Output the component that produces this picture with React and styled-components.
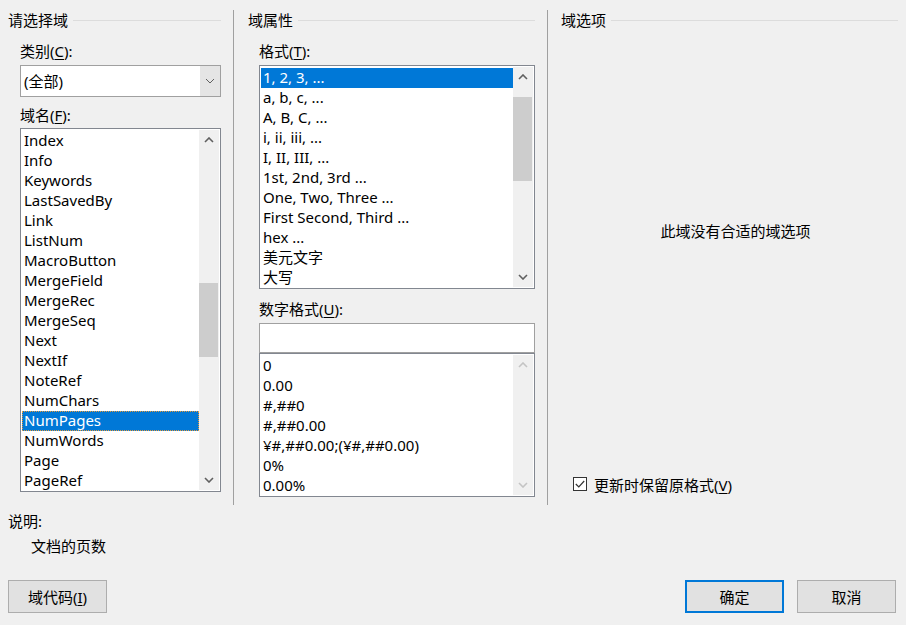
import React from 'react';
import styled, { createGlobalStyle } from 'styled-components';

const GlobalStyle = createGlobalStyle`
  html, body {
    margin: 0;
    padding: 0;
    background: #f0f0f0;
  }
  body {
    font-family: "Segoe UI", "Noto Sans", "Noto Sans CJK SC", sans-serif;
    font-size: 15px;
    color: #000;
  }
  u {
    text-decoration-thickness: 1px;
    text-underline-offset: 2px;
  }
`;

const fieldNames = [
  'Index', 'Info', 'Keywords', 'LastSavedBy', 'Link', 'ListNum', 'MacroButton',
  'MergeField', 'MergeRec', 'MergeSeq', 'Next', 'NextIf', 'NoteRef', 'NumChars',
  'NumPages', 'NumWords', 'Page', 'PageRef',
];

const formats = [
  '1, 2, 3, ...', 'a, b, c, ...', 'A, B, C, ...', 'i, ii, iii, ...', 'I, II, III, ...',
  '1st, 2nd, 3rd ...', 'One, Two, Three ...', 'First Second, Third ...', 'hex ...',
  '美元文字', '大写',
];

const numberFormats = [
  '0', '0.00', '#,##0', '#,##0.00', '¥#,##0.00;(¥#,##0.00)', '0%', '0.00%',
];

const Dialog = styled.div`
  width: 906px;
  height: 625px;
  box-sizing: border-box;
  padding: 10px 8px 0;
  display: flex;
  flex-direction: column;
`;

const Columns = styled.div`
  display: grid;
  grid-template-columns: 225px 314px 351px;
  height: 495px;
`;

const Column = styled.div`
  display: flex;
  flex-direction: column;
  box-sizing: border-box;
  min-width: 0;
  padding: 0 ${p => p.$padRight}px 0 ${p => p.$padLeft}px;
  border-left: ${p => (p.$divider ? '1px solid #a0a0a0' : 'none')};
`;

const GroupTitle = styled.div`
  display: flex;
  align-items: center;
  gap: 5px;
  height: 20px;
  line-height: 20px;
  white-space: nowrap;
  &::after {
    content: '';
    flex: 1;
    border-top: 1px solid #dcdcdc;
    margin-top: 1px;
  }
`;

const GroupBody = styled.div`
  display: flex;
  flex-direction: column;
  padding-left: ${p => p.$indent}px;
`;

const Label = styled.div`
  line-height: 20px;
  height: 20px;
  white-space: nowrap;
  margin-top: ${p => p.$mt || 0}px;
  padding-left: ${p => p.$indent || 0}px;
`;

const ComboBox = styled.div`
  display: flex;
  height: 32px;
  box-sizing: border-box;
  margin-top: 4px;
  border: 1px solid #a0a0a0;
  background: #fff;
`;

const ComboValue = styled.div`
  flex: 1;
  line-height: 30px;
  padding-left: 3px;
`;

const DropButton = styled.div`
  width: 20px;
  background: #e5e5e5;
  display: flex;
  align-items: center;
  justify-content: center;
`;

const ListBox = styled.div`
  display: flex;
  height: ${p => p.$h}px;
  box-sizing: border-box;
  margin-top: ${p => p.$mt || 0}px;
  border: 1px solid #828790;
  background: #fff;
  padding: 1px;
`;

const Items = styled.div`
  flex: 1;
  min-width: 0;
  padding-top: 1px;
  overflow: hidden;
`;

const Item = styled.div`
  height: 20px;
  line-height: 19px;
  padding: 0 0 1px 2px;
  white-space: nowrap;
  box-sizing: border-box;
  background: ${p => (p.$selected ? '#0078d7' : 'transparent')};
  color: ${p => (p.$selected ? '#fff' : '#000')};
  outline: ${p => (p.$focused ? '1px dotted #e59a3c' : 'none')};
  outline-offset: -1px;
`;

const Scrollbar = styled.div`
  width: 20px;
  flex: none;
  background: #f0f0f0;
  display: flex;
  flex-direction: column;
`;

const ScrollArrow = styled.div`
  height: 20px;
  flex: none;
  display: flex;
  align-items: center;
  justify-content: center;
  margin-top: ${p => (p.$bottom ? 'auto' : '0')};
`;

const Thumb = styled.div`
  margin: ${p => p.$offset}px 1px 0 0;
  height: ${p => p.$size}px;
  background: #cdcdcd;
`;

const TextInput = styled.div`
  height: 30px;
  box-sizing: border-box;
  margin-top: 4px;
  border: 1px solid #a0a0a0;
  background: #fff;
`;

const Message = styled.div`
  margin-top: 191px;
  padding-left: 12px;
  line-height: 20px;
  text-align: center;
`;

const CheckRow = styled.label`
  display: flex;
  align-items: center;
  gap: 7px;
  height: 20px;
  margin-top: 233px;
  padding-left: 12px;
`;

const CheckBox = styled.span`
  width: 14px;
  height: 14px;
  box-sizing: border-box;
  border: 1px solid #333;
  background: #fff;
  display: flex;
  align-items: center;
  justify-content: center;
`;

const ButtonRow = styled.div`
  display: flex;
  justify-content: space-between;
  margin-top: 24px;
  padding-right: 2px;
`;

const ButtonGroup = styled.div`
  display: flex;
  gap: 13px;
`;

const Button = styled.button`
  width: 99px;
  height: 33px;
  box-sizing: border-box;
  padding: 0;
  background: #e1e1e1;
  border: ${p => (p.$default ? '2px solid #0078d7' : '1px solid #adadad')};
  font: inherit;
  color: #000;
`;

const Chevron = ({ up, disabled, thin }) => (
  <svg width="10" height="6" viewBox="0 0 10 6">
    <polyline
      points={up ? '1,5 5,1 9,5' : '1,1 5,5 9,1'}
      fill="none"
      stroke={disabled ? '#c4c4c4' : '#606060'}
      strokeWidth={thin ? 1 : 1.6}
    />
  </svg>
);

const VScroll = ({ thumb, disabled }) => (
  <Scrollbar>
    <ScrollArrow>
      <Chevron up disabled={disabled} />
    </ScrollArrow>
    {thumb && <Thumb $offset={thumb[0]} $size={thumb[1]} />}
    <ScrollArrow $bottom>
      <Chevron disabled={disabled} />
    </ScrollArrow>
  </Scrollbar>
);

export default function App() {
  return (
    <>
      <GlobalStyle />
      <Dialog>
        <Columns>
          <Column $padLeft={0} $padRight={12}>
            <GroupTitle>请选择域</GroupTitle>
            <GroupBody $indent={12}>
              <Label $mt={11}>类别(<u>C</u>):</Label>
              <ComboBox>
                <ComboValue>(全部)</ComboValue>
                <DropButton>
                  <Chevron thin />
                </DropButton>
              </ComboBox>
              <Label $mt={8}>域名(<u>F</u>):</Label>
              <ListBox $h={364} $mt={3}>
                <Items>
                  {fieldNames.map(name => (
                    <Item key={name} $selected={name === 'NumPages'} $focused={name === 'NumPages'}>
                      {name}
                    </Item>
                  ))}
                </Items>
                <VScroll thumb={[133, 74]} />
              </ListBox>
            </GroupBody>
          </Column>

          <Column $divider $padLeft={14} $padRight={12}>
            <GroupTitle>域属性</GroupTitle>
            <GroupBody $indent={11}>
              <Label $mt={11}>格式(<u>T</u>):</Label>
              <ListBox $h={224} $mt={4}>
                <Items>
                  {formats.map((f, i) => (
                    <Item key={f} $selected={i === 0}>{f}</Item>
                  ))}
                </Items>
                <VScroll thumb={[10, 84]} />
              </ListBox>
              <Label $mt={10}>数字格式(<u>U</u>):</Label>
              <TextInput />
              <ListBox $h={144}>
                <Items>
                  {numberFormats.map(f => (
                    <Item key={f}>{f}</Item>
                  ))}
                </Items>
                <VScroll disabled />
              </ListBox>
            </GroupBody>
          </Column>

          <Column $divider $padLeft={13} $padRight={0}>
            <GroupTitle>域选项</GroupTitle>
            <Message>此域没有合适的域选项</Message>
            <CheckRow>
              <CheckBox>
                <svg width="10" height="8" viewBox="0 0 10 8">
                  <polyline points="0.8,4 3.8,7 9.2,1" fill="none" stroke="#333" strokeWidth="1.2" />
                </svg>
              </CheckBox>
              <span>更新时保留原格式(<u>V</u>)</span>
            </CheckRow>
          </Column>
        </Columns>

        <Label $mt={6}>说明:</Label>
        <Label $mt={5} $indent={23}>文档的页数</Label>

        <ButtonRow>
          <Button>域代码(<u>I</u>)</Button>
          <ButtonGroup>
            <Button $default>确定</Button>
            <Button>取消</Button>
          </ButtonGroup>
        </ButtonRow>
      </Dialog>
    </>
  );
}
